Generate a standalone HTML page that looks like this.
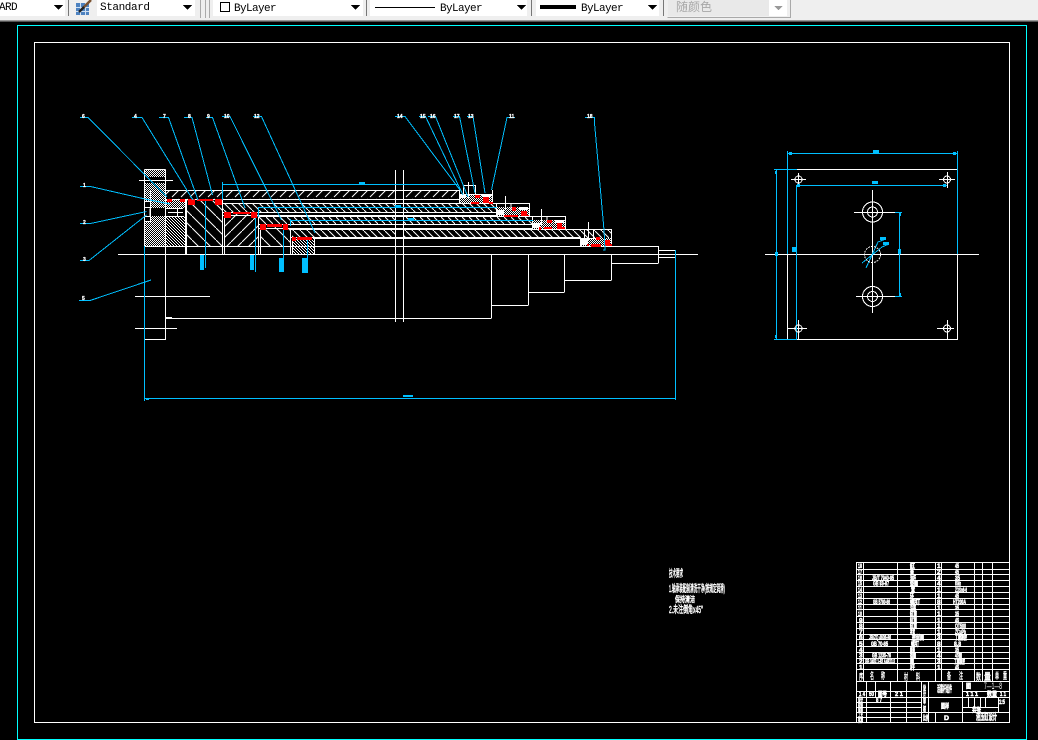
<!DOCTYPE html>
<html><head><meta charset="utf-8"><title>CAD</title>
<style>
html,body{margin:0;padding:0;background:#000;width:1038px;height:740px;overflow:hidden}
svg{position:absolute;left:0;top:0;display:block}
.g{shape-rendering:crispEdges}
text{font-family:"Liberation Sans","Noto Sans CJK SC",sans-serif}
.tb{font-family:"Liberation Mono","Noto Sans CJK SC",monospace;font-size:11px;letter-spacing:-.6px;fill:#000}
.t{fill:#fff;font-size:6.500px;font-weight:700;stroke:#fff;stroke-width:.55}
.w{fill:none;stroke:#fff;stroke-width:1}
.b{fill:none;stroke:#00bfff;stroke-width:1}
</style></head><body>
<svg width="1038" height="740" viewBox="0 0 1038 740" xmlns="http://www.w3.org/2000/svg">
<defs>
<pattern id="ck" width="2" height="2" patternUnits="userSpaceOnUse"><rect width="2" height="2" fill="#000"/><rect width="1" height="1" fill="#fff"/><rect x="1" y="1" width="1" height="1" fill="#fff"/></pattern>
<pattern id="ha" width="12" height="12" patternUnits="userSpaceOnUse"><path d="M0 0L12 12" stroke="#fff" fill="none"/></pattern>
<pattern id="hb" width="11" height="11" patternUnits="userSpaceOnUse"><path d="M0 11L11 0" stroke="#fff" fill="none"/></pattern>
<pattern id="h1" width="9" height="9" patternUnits="userSpaceOnUse"><path d="M1 8L8 1" stroke="#fff" fill="none"/></pattern>
<pattern id="h2" width="7" height="7" patternUnits="userSpaceOnUse"><path d="M0 0L7 7" stroke="#fff" fill="none"/></pattern>
<pattern id="hd" width="3" height="3" patternUnits="userSpaceOnUse"><rect width="3" height="3" fill="#000"/><path d="M0 0h1v1H0zM1 1h1v1H1zM2 2h1v1H2z" fill="#fff"/></pattern>
</defs>

<!-- toolbar -->
<g class="g">
<rect x="0" y="0" width="1038" height="20" fill="#efefef"/>
<rect x="0" y="20" width="1038" height="1" fill="#9a9a9a"/>
<rect x="0" y="21" width="1038" height="1" fill="#555"/>
<rect x="0" y="0" width="65" height="16" fill="#fff"/>
<rect x="68" y="0" width="1" height="16" fill="#777"/>
<rect x="97" y="0" width="98" height="16" fill="#fff"/>
<path d="M200.500 0V18M205.500 0V18M209.500 0V18" stroke="#aaa" fill="none"/>
<rect x="213" y="0" width="150" height="16" fill="#fff"/>
<rect x="366" y="0" width="1" height="16" fill="#777"/>
<rect x="370" y="0" width="157" height="16" fill="#fff"/>
<rect x="531" y="0" width="1" height="16" fill="#777"/>
<rect x="536" y="0" width="123" height="16" fill="#fff"/>
<rect x="663" y="0" width="1" height="16" fill="#777"/>
<rect x="668" y="0" width="101" height="16" fill="#e9e9e9"/>
<rect x="769" y="0" width="18" height="16" fill="#fff"/>
<path d="M667.500 17.500H790.500V0" stroke="#a9a9a9" fill="none"/>
<path d="M54 5h9l-4.500 5zM183 5h9l-4.500 5zM351 5h9l-4.500 5zM517 5h9l-4.500 5zM648 5h9l-4.500 5z" fill="#000"/>
<path d="M774 6h9l-4.500 4z" fill="#9a9a9a"/>
<rect x="220.500" y="2.500" width="9" height="9" fill="#fff" stroke="#000"/>
<rect x="375" y="7" width="60" height="1" fill="#000"/>
<rect x="540" y="5" width="36" height="4" fill="#000"/>
<rect x="76" y="3" width="13" height="12" fill="#4d82c0"/>
<path d="M76 7.500h13M76 11.500h13M80.500 3v12M85.500 3v12" stroke="#cfe0f2" fill="none"/>
</g>
<path d="M83 8L91 0" stroke="#7a5230" stroke-width="2.500" fill="none"/>
<path d="M79 12L84 7" stroke="#222" stroke-width="2.500" fill="none"/>
<text class="tb" x="-7" y="10">OARD</text>
<text class="tb" x="100" y="10" style="letter-spacing:-.4px">Standard</text>
<text class="tb" x="234" y="11">ByLayer</text>
<text class="tb" x="440" y="11">ByLayer</text>
<text class="tb" x="581" y="11">ByLayer</text>
<text x="676" y="11" style="font-size:12px;fill:#a8a8a8;font-family:'Liberation Sans','Noto Sans CJK SC',sans-serif">随颜色</text>

<!-- frames -->
<g class="g">
<rect x="17.500" y="25.500" width="1009" height="714" fill="none" stroke="#00ffff"/>
<rect x="34.500" y="42.500" width="975" height="680" fill="none" stroke="#fff"/>

<!-- hatch fills -->
<rect x="145" y="170" width="21" height="7" fill="url(#ck)"/>
<rect x="145" y="183" width="21" height="63" fill="url(#ck)"/>
<rect x="166" y="200" width="20" height="8" fill="url(#ck)"/>
<rect x="166" y="216" width="20" height="30" fill="url(#hd)"/>
<rect x="166" y="190" width="293" height="9" fill="url(#h1)"/>
<rect x="223" y="203" width="273" height="9" fill="url(#h2)"/>
<rect x="258" y="217" width="274" height="8" fill="url(#h2)"/>
<rect x="292" y="229" width="320" height="9" fill="url(#h2)"/>
<rect x="187" y="199" width="35" height="47" fill="url(#ha)"/>
<rect x="225" y="212" width="33" height="34" fill="url(#hb)"/>
<rect x="261" y="225" width="29" height="21" fill="url(#ha)"/>
<rect x="292" y="238" width="22" height="16" fill="url(#hd)"/>
<rect x="395" y="170" width="9" height="152" fill="#000"/>
<rect x="150" y="208" width="33" height="8" fill="#000"/>
<rect x="144" y="201" width="6" height="21" fill="#000"/>
<rect x="459" y="194" width="33" height="9" fill="url(#ck)"/>
<rect x="496" y="207" width="33" height="9" fill="url(#ck)"/>
<rect x="532" y="220" width="33" height="9" fill="url(#ck)"/>
<rect x="580" y="238" width="32" height="8" fill="url(#ck)"/>
<rect x="463" y="185" width="12" height="9" fill="#000"/>
<rect x="460" y="194" width="6" height="4" fill="#fff"/>
<rect x="497" y="210" width="7" height="5" fill="#fff"/>
<rect x="533" y="223" width="7" height="5" fill="#fff"/>
<rect x="581" y="239" width="7" height="6" fill="#fff"/>
<rect x="482" y="194" width="9" height="3" fill="#fff"/>
<rect x="519" y="207" width="9" height="3" fill="#fff"/>
<rect x="555" y="220" width="9" height="3" fill="#fff"/>

<!-- main section white lines -->
<path class="w" d="M118 254.500H698M144.500 169.500V340M165.500 169.500V340M144.500 169.500H165.500M139 180.500H173M145 246.500H659M145 339.500H165.500M135 296.500H210M135 328.500H177M166 318.500H491.500M172 317.500h-6M395.500 170V322M403.500 170V322
M166 190.500H459M166 199.500H459M222 203.500H496M223 212.500H496M223 215.500H496M258 216.500H532M258 224.500H532M258 228.500H532M290 229.500H612M290 237.500H580M314 238.500H580M459.500 190V203M185.500 199V254M186.500 199V254M222.500 199V254M224.500 212V254M258.500 215V254M260.500 225V254M290.500 229V254M292.500 238V254M314.500 238V254
M166 208.500H183M166 216.500H183M150 208.500V216M144 201.500H150M144 207.500H150M144 216.500H150M144 221.500H150M150.500 190V222M168 212.500H183M177.500 208V216
M463.500 185V194M475.500 185V194M463.500 185.500H475.500M468.500 182V198M459 194.500H492M492.500 190V203M459 203.500H492
M496.500 203V216M529.500 203V216M496 203.500H529M496 210.500H504M505.500 196V210M511 204V210
M532.500 216V229M565.500 216V229M532 216.500H565M532 223.500H541M541.500 209V225M547 217V223
M580.500 238V246M611.500 229V246M584.500 229V238M593.500 229V238M588.500 222V240M580 238.500H596
M491.500 254V318M491 305.500H528.500M528.500 254V305M528 292.500H564.500M564.500 254V292M564 280.500H611.500M611.500 254V280M611 263.500H658.500M658.500 246V263M659 250.500H675.500M659 257.500H675.500M675.500 250V258"/>

<!-- red -->
<path fill="#f00" d="M167 199h5v3h-5zM180 199h5v3h-5zM188 199h7v6h-7zM197 199h16v2h-16zM215 199h7v6h-7zM224 212h7v6h-7zM233 212h17v2h-17zM251 212h6v6h-6zM260 224h6v6h-6zM267 224h15v3h-15zM283 224h5v6h-5zM292 237h4v4h-4zM297 237h15v3h-15z
M475 195h5v3h-5zM483 197h6v6h-6zM471 202h8v2h-8zM489 202h4v2h-4zM512 207h4v4h-4zM521 211h6v5h-6zM504 215h14v2h-14zM527 215h2v1h-2zM547 220h5v3h-5zM557 223h5v6h-5zM544 227h8v2h-8zM562 227h3v2h-3zM539 227h2v3h-2zM596 237h4v3h-4zM605 240h5v6h-5zM591 244h10v3h-10zM610 244h2v2h-2zM587 244h2v2h-2z"/>

<!-- cyan dimension -->
<path class="b" d="M144.500 246V401M144.500 398.500H675.500M675.500 250V400M222.500 182V200M222 184.500H458M258.500 207V217M258 207.500H497M290.500 219V226M290 220.500H533M205.500 201V268M255.500 218V272M283.500 230V272M307.500 240V273M594.500 117V123"/>
<path fill="#00bfff" d="M200 255h4v15h-4zM250 255h4v15h-4zM279 258h4v14h-4zM302 258h5v15h-5zM359 182h6v2h-6zM395 205h6v2h-6zM408 218h6v2h-6zM146 399h3v1h-3zM403 395h10v2h-10z"/>
</g>
<!-- leaders -->
<path class="g b" d="M80 117.500H88L167 197M132 117.500H142L193 200M159 117.500H168.500L198 200M184 117.500H192L212.500 195M206 117.500H212.500L245 208M222 116.500H230L281.500 220M253 116.500H261.500L315 233
M80 186.500H90.500L145 199L170 204M80 223.500H90.500L146.500 211.500M80 260.500H89L146.500 215M79 300.500H90L151 280
M395 116.500H405L460 190M419 116.500H425.500L463 195M428 116.500H435.500L468 197M453 116.500H459.500L475 193M467 116.500H473L485 193M515 117.500H507L491.500 190M585 117.500H594.500V123L604 230L605 250H603"/>

<!-- balloons -->
<g class="t" style="font-size:5px;stroke-width:.3">
<text x="82" y="118">6</text><text x="134" y="118">4</text><text x="163" y="118">7</text><text x="188" y="118">8</text><text x="207" y="118">9</text><text x="224" y="118">10</text><text x="254" y="118">12</text>
<text x="83" y="187">1</text><text x="83" y="224">2</text><text x="83" y="261">3</text><text x="82" y="300">5</text>
<text x="397" y="118">14</text><text x="420" y="118">15</text><text x="430" y="118">16</text><text x="454" y="118">17</text><text x="468" y="118">13</text><text x="509" y="118">11</text><text x="587" y="118">18</text>
</g>

<!-- right view -->
<g class="g">
<path class="w" d="M787.500 254V339.500H957.500V254M797 169.500H957.500V254M765 254.500H979M872.500 190V313M854 212.500H895M856 296.500H895M791 179.500H806M798.500 173V186M939 179.500H955M947.500 172V188M788 328.500H807M798.500 320V339M937 328.500H954M947.500 320V339"/>
<path class="b" d="M787.500 151V254M957.500 151V254M787 153.500H957M774 169.500H797M774 339.500H797M776.500 169V339M796.500 185V339M796 185.500H947M895 212.500H902M895 296.500H902M899.500 212V297"/>
<path fill="#00bfff" d="M789 152h3v3h-3zM953 152h3v3h-3zM792 247h5v5h-5zM775 171h2v3h-2zM775 335h2v3h-2zM898 249h3v5h-3zM900 213h1v3h-1zM900 293h1v3h-1zM797 184h3v3h-3zM943 184h3v3h-3zM872 181h6v3h-6zM873 150h6v3h-6zM775 252h3v4h-3zM880 237h6v3h-6zM883 242h6v3h-6z"/>
<path class="b" d="M866 268L878 242L886 239M862 263L882 247L889 244"/>
<g class="w">
<circle cx="798.500" cy="179.500" r="3.500"/><circle cx="947" cy="179.500" r="3.500"/><circle cx="798.500" cy="328.500" r="3.500"/><circle cx="947" cy="328.500" r="3.500"/>
<circle cx="872.500" cy="212" r="10"/><circle cx="872.500" cy="212" r="5"/>
<circle cx="872.500" cy="296.500" r="10"/><circle cx="872.500" cy="296.500" r="5"/>
<circle cx="872.500" cy="254.500" r="8" stroke-dasharray="2 1"/>
</g>
</g>

<!-- title block lines -->
<path class="g w" d="M856.500 562V722M856 562.500H1009M856 569.500H1009M856 574.500H1009M856 580.500H1009M856 586.500H1009M856 592.500H1009M856 598.500H1009M856 604.500H1009M856 609.500H1009M856 616.500H1009M856 622.500H1009M856 628.500H1009M856 634.500H1009M856 639.500H1009M856 646.500H1009M856 652.500H1009M856 658.500H1009M856 663.500H1009M856 669.500H1009M856 681.500H1009
M863.500 562V682M897.500 562V682M935.500 562V682M941.500 562V682M974.500 562V682M982.500 562V682M992.500 562V682
M856 691.500H922M856 697.500H922M856 702.500H922M856 707.500H922M856 712.500H922M856 717.500H922
M866.500 682V722M875.500 682V697M890.500 682V722M906.500 682V722M921.500 682V722M928.500 682V722M935.500 712V722M962.500 682V722
M922 697.500H962M922 712.500H1009M962 691.500H1009M962 697.500H1009M962 707.500H998
M968.500 697V707M974.500 697V707M980.500 697V707M985.500 697V707M998.500 697V712"/>

<!-- title block text -->
<g class="t">
<text x="858" y="568" textLength="4" lengthAdjust="spacingAndGlyphs">18</text><text x="858" y="574" textLength="4" lengthAdjust="spacingAndGlyphs">17</text><text x="858" y="580" textLength="4" lengthAdjust="spacingAndGlyphs">16</text><text x="858" y="585.500" textLength="4" lengthAdjust="spacingAndGlyphs">15</text><text x="858" y="592" textLength="4" lengthAdjust="spacingAndGlyphs">14</text><text x="858" y="598" textLength="4" lengthAdjust="spacingAndGlyphs">13</text><text x="858" y="604" textLength="4" lengthAdjust="spacingAndGlyphs">12</text><text x="858" y="610" textLength="4" lengthAdjust="spacingAndGlyphs">11</text><text x="858" y="616" textLength="4" lengthAdjust="spacingAndGlyphs">10</text><text x="859" y="622.500">9</text><text x="859" y="628">8</text><text x="859" y="634">7</text><text x="859" y="639.500">6</text><text x="859" y="646">5</text><text x="859" y="652">4</text><text x="859" y="657.500">3</text><text x="859" y="663.500">2</text><text x="859" y="669.500">1</text>
<text x="872" y="580" textLength="22" lengthAdjust="spacingAndGlyphs">JB/T 7940-95</text>
<text x="873" y="585.500" textLength="16" lengthAdjust="spacingAndGlyphs">GB 93-87</text>
<text x="873" y="604" textLength="17" lengthAdjust="spacingAndGlyphs">GB 5780-86</text>
<text x="869" y="639.500" textLength="22" lengthAdjust="spacingAndGlyphs">JB/ZQ 4606-86</text>
<text x="871" y="646" textLength="17" lengthAdjust="spacingAndGlyphs">GB 70-85</text>
<text x="872" y="657.500" textLength="19" lengthAdjust="spacingAndGlyphs">GB 1235-76</text>
<text x="865" y="663.500" textLength="30" lengthAdjust="spacingAndGlyphs">GB 3452.1-82 A48X3.5</text>
<text x="910" y="568" textLength="5" lengthAdjust="spacingAndGlyphs">缸</text><text x="910" y="574" textLength="4" lengthAdjust="spacingAndGlyphs">盖</text><text x="910" y="580" textLength="6" lengthAdjust="spacingAndGlyphs">油杯</text><text x="910" y="585.500" textLength="8" lengthAdjust="spacingAndGlyphs">垫圈</text><text x="911" y="592" textLength="4" lengthAdjust="spacingAndGlyphs">套</text><text x="910" y="598" textLength="4" lengthAdjust="spacingAndGlyphs">环</text><text x="910" y="604" textLength="10" lengthAdjust="spacingAndGlyphs">螺钉</text><text x="910" y="610" textLength="6" lengthAdjust="spacingAndGlyphs">活塞</text><text x="910" y="616" textLength="7" lengthAdjust="spacingAndGlyphs">缸筒</text><text x="910" y="622.500" textLength="7" lengthAdjust="spacingAndGlyphs">缸筒</text><text x="910" y="628" textLength="7" lengthAdjust="spacingAndGlyphs">缸筒</text><text x="910" y="634" textLength="5" lengthAdjust="spacingAndGlyphs">导套</text><text x="912" y="639.500" textLength="12" lengthAdjust="spacingAndGlyphs">密封圈</text><text x="911" y="646" textLength="8" lengthAdjust="spacingAndGlyphs">螺钉</text><text x="910" y="652" textLength="5" lengthAdjust="spacingAndGlyphs">端盖</text><text x="910" y="657.500" textLength="6" lengthAdjust="spacingAndGlyphs">挡圈</text><text x="910" y="663.500" textLength="4" lengthAdjust="spacingAndGlyphs">圈</text><text x="910" y="669.500" textLength="5" lengthAdjust="spacingAndGlyphs">杆</text>
<text x="937" y="568">1</text><text x="937" y="574">2</text><text x="937" y="580">4</text><text x="937" y="585.500">4</text><text x="937" y="592">1</text><text x="937" y="598">1</text><text x="937" y="604">8</text><text x="937" y="610">1</text><text x="937" y="616">1</text><text x="937" y="622.500">1</text><text x="937" y="628">1</text><text x="937" y="634">1</text><text x="937" y="639.500">3</text><text x="937" y="646">8</text><text x="937" y="652">1</text><text x="937" y="657.500">4</text><text x="937" y="663.500">3</text><text x="937" y="669.500">1</text>
<text x="955" y="568" textLength="4" lengthAdjust="spacingAndGlyphs">45</text><text x="955" y="574" textLength="4" lengthAdjust="spacingAndGlyphs">45</text><text x="955" y="580" textLength="5" lengthAdjust="spacingAndGlyphs">35</text><text x="955" y="585.500" textLength="6" lengthAdjust="spacingAndGlyphs">65Mn</text><text x="955" y="592" textLength="12" lengthAdjust="spacingAndGlyphs">ZQSn6-6</text><text x="955" y="598" textLength="4" lengthAdjust="spacingAndGlyphs">45</text><text x="953" y="604" textLength="13" lengthAdjust="spacingAndGlyphs">HT200A</text><text x="955" y="610" textLength="4" lengthAdjust="spacingAndGlyphs">35</text><text x="955" y="616" textLength="4" lengthAdjust="spacingAndGlyphs">35</text><text x="955" y="622.500" textLength="4" lengthAdjust="spacingAndGlyphs">45</text><text x="955" y="628" textLength="11" lengthAdjust="spacingAndGlyphs">QT500</text><text x="955" y="634" textLength="11" lengthAdjust="spacingAndGlyphs">ZCuPb</text><text x="955" y="639.500" textLength="12" lengthAdjust="spacingAndGlyphs">丁腈橡胶</text><text x="954" y="646" textLength="7" lengthAdjust="spacingAndGlyphs">8.8</text><text x="955" y="652" textLength="4" lengthAdjust="spacingAndGlyphs">35</text><text x="955" y="657.500" textLength="7" lengthAdjust="spacingAndGlyphs">45钢</text><text x="954" y="663.500" textLength="11" lengthAdjust="spacingAndGlyphs">丁腈橡胶</text><text x="955" y="669.500" textLength="4" lengthAdjust="spacingAndGlyphs">45</text>
</g>
<g class="t" style="font-size:9px;font-weight:400;stroke-width:.4">
<text x="859" y="680" textLength="4" lengthAdjust="spacingAndGlyphs">序</text>
<text x="870" y="679" textLength="4" lengthAdjust="spacingAndGlyphs">名</text><text x="881" y="679" textLength="4" lengthAdjust="spacingAndGlyphs">称</text>
<text x="904" y="680" textLength="4" lengthAdjust="spacingAndGlyphs">材</text><text x="916" y="680" textLength="4" lengthAdjust="spacingAndGlyphs">料</text>
<text x="947" y="679" textLength="4" lengthAdjust="spacingAndGlyphs">备</text><text x="959" y="679" textLength="4" lengthAdjust="spacingAndGlyphs">注</text>
<text x="995" y="679" textLength="4" lengthAdjust="spacingAndGlyphs">单</text><text x="1003" y="679" textLength="4" lengthAdjust="spacingAndGlyphs">重</text>
<text x="976" y="680" textLength="5" lengthAdjust="spacingAndGlyphs">数</text><text x="984" y="680" textLength="7" lengthAdjust="spacingAndGlyphs">量</text>
</g>
<g class="t">
<text x="937" y="692" textLength="15" lengthAdjust="spacingAndGlyphs" style="font-size:9px">活塞杆组件</text>
<text x="941" y="708" textLength="8" lengthAdjust="spacingAndGlyphs">图样</text>
<text x="923" y="720" textLength="6" lengthAdjust="spacingAndGlyphs">比例</text>
<text x="944" y="720" textLength="5" lengthAdjust="spacingAndGlyphs">D</text>
<text x="976" y="720" textLength="21" lengthAdjust="spacingAndGlyphs" style="font-size:9px">液压缸设计</text>
<text x="984" y="689" textLength="18" lengthAdjust="spacingAndGlyphs" style="font-weight:400;stroke:none;font-size:9px">7—1—8</text>
<text x="966" y="688" textLength="5" lengthAdjust="spacingAndGlyphs">图</text>
<text x="966" y="696" textLength="12" lengthAdjust="spacingAndGlyphs">1 1 1</text>
<text x="987" y="696" textLength="10" lengthAdjust="spacingAndGlyphs">数量</text>
<text x="1000" y="696" textLength="6" lengthAdjust="spacingAndGlyphs">1 1</text>
<text x="999" y="704" textLength="6" lengthAdjust="spacingAndGlyphs">1:5</text>
<text x="972" y="712" textLength="9" lengthAdjust="spacingAndGlyphs">共张</text>
<text x="859" y="696" textLength="6" lengthAdjust="spacingAndGlyphs">1 4</text>
<text x="869" y="696" textLength="5" lengthAdjust="spacingAndGlyphs">50</text>
<text x="878" y="696" textLength="9" lengthAdjust="spacingAndGlyphs">图号</text>
<text x="895" y="696" textLength="8" lengthAdjust="spacingAndGlyphs">2 1</text>
<text x="876" y="702" textLength="6" lengthAdjust="spacingAndGlyphs">8 7</text>
<text x="923" y="690" textLength="3" lengthAdjust="spacingAndGlyphs">设</text><text x="923" y="696" textLength="3" lengthAdjust="spacingAndGlyphs">计</text>
<text x="923" y="703" textLength="3" lengthAdjust="spacingAndGlyphs">审</text><text x="923" y="711" textLength="3" lengthAdjust="spacingAndGlyphs">核</text>
<text x="858" y="702" textLength="5" lengthAdjust="spacingAndGlyphs">设计</text><text x="858" y="707" textLength="5" lengthAdjust="spacingAndGlyphs">校核</text><text x="858" y="712" textLength="5" lengthAdjust="spacingAndGlyphs">审核</text><text x="858" y="717" textLength="5" lengthAdjust="spacingAndGlyphs">工艺</text><text x="858" y="722" textLength="5" lengthAdjust="spacingAndGlyphs">批准</text>
</g>

<!-- technical notes -->
<g fill="#fff" style="font-size:10px" stroke="#fff" stroke-width=".55">
<text x="669" y="577" textLength="14" lengthAdjust="spacingAndGlyphs">技术要求</text>
<text x="669" y="592" textLength="56" lengthAdjust="spacingAndGlyphs">1.轴承装配前清洗干净(按规定润滑)</text>
<text x="675" y="602" textLength="20" lengthAdjust="spacingAndGlyphs" style="font-size:8px">保持清洁</text>
<text x="669" y="613" textLength="34" lengthAdjust="spacingAndGlyphs">2.未注倒角x45°</text>
</g>
</svg>
</body></html>
